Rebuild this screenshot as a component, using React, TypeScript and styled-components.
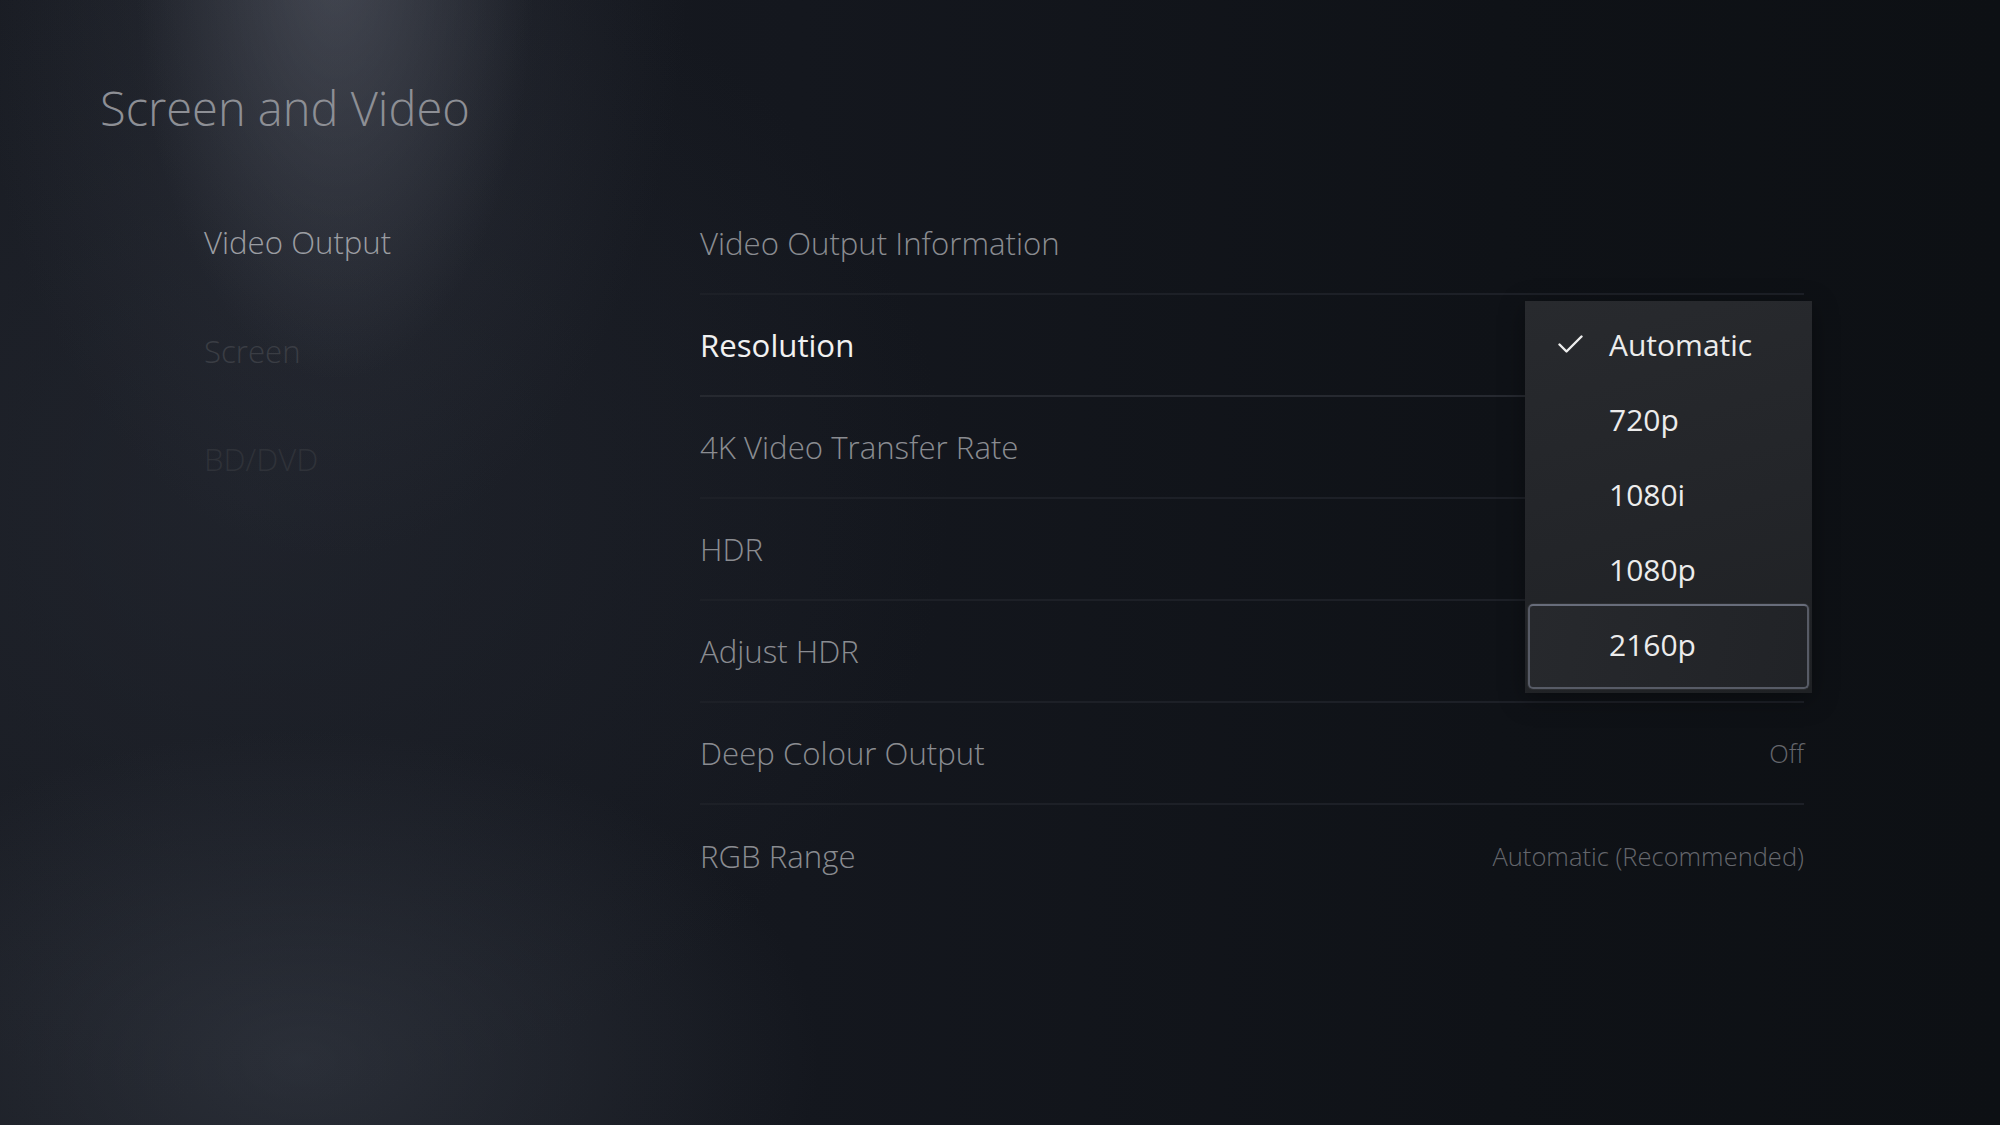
import React from "react";
import styled, { createGlobalStyle } from "styled-components";

const GlobalStyle = createGlobalStyle`
  html, body {
    margin: 0;
    padding: 0;
    background: #12151b;
  }
  * { box-sizing: border-box; }
`;

const Screen = styled.div`
  position: relative;
  width: 2000px;
  height: 1125px;
  overflow: hidden;
  font-family: "Open Sans", "Noto Sans", "DejaVu Sans", sans-serif;
  font-weight: 300;
  background:
    radial-gradient(ellipse 200px 420px at 335px -40px, rgba(100, 104, 116, 0.45), rgba(0, 0, 0, 0) 100%),
    radial-gradient(ellipse 360px 620px at 330px -60px, rgba(70, 74, 86, 0.35), rgba(0, 0, 0, 0) 100%),
    radial-gradient(ellipse 520px 330px at 300px 1060px, rgba(70, 76, 88, 0.42), rgba(0, 0, 0, 0) 100%),
    radial-gradient(ellipse 700px 600px at 250px 500px, rgba(40, 44, 54, 0.5), rgba(0, 0, 0, 0) 100%),
    linear-gradient(90deg, #181b22 0%, #14171e 40%, #0f1217 75%, #0d1014 100%);
`;

const Header = styled.header`
  padding: 85px 0 0 100px;
`;

const Title = styled.h1`
  margin: 0;
  font-size: 47px;
  line-height: 1;
  font-weight: 300;
  color: #8d8f95;
`;

const Main = styled.main`
  display: flex;
  margin-top: 61px;
  padding-left: 204px;
`;

const Nav = styled.nav`
  display: flex;
  flex-direction: column;
  gap: 78.5px;
  width: 496px;
  padding-top: 34px;
`;

const NavItem = styled.div<{ $tone: "active" | "dim" | "dimmer" }>`
  font-size: 31.2px;
  line-height: 30px;
  color: ${(p) => (p.$tone === "active" ? "#9b9da2" : p.$tone === "dim" ? "#3a3d44" : "#2f3239")};
`;

const List = styled.section`
  display: flex;
  flex-direction: column;
  width: 1104px;
`;

const Row = styled.div<{ $focused?: boolean; $last?: boolean }>`
  position: relative;
  display: flex;
  align-items: center;
  justify-content: space-between;
  height: 102px;
  padding-bottom: 1px;
  border-bottom: ${(p) => (p.$last ? "none" : `2px solid ${p.$focused ? "#262930" : "#1d2027"}`)};
`;

const Label = styled.span<{ $focused?: boolean }>`
  font-size: 31.2px;
  line-height: 30px;
  font-weight: ${(p) => (p.$focused ? 400 : 300)};
  color: ${(p) => (p.$focused ? "#f1f1f1" : "#8a8c91")};
`;

const Value = styled.span`
  font-size: 25.5px;
  line-height: 24px;
  color: #64666c;
`;

const Dropdown = styled.div`
  position: absolute;
  top: 6px;
  right: -8px;
  width: 287px;
  padding: 8px 3px 9px;
  background: linear-gradient(165deg, #282a2e 0%, #232529 55%, #1f2124 100%);
  box-shadow: 0 6px 24px rgba(0, 0, 0, 0.35);
  z-index: 2;
`;

const Option = styled.div<{ $focused?: boolean }>`
  display: flex;
  align-items: center;
  height: ${(p) => (p.$focused ? "85px" : "75px")};
  margin: ${(p) => (p.$focused ? "-5px 0 -5px" : "0")};
  padding: 0 0 4px ${(p) => (p.$focused ? "28px" : "30px")};
  border: ${(p) => (p.$focused ? "2px solid #575b66" : "none")};
  border-top-color: ${(p) => (p.$focused ? "#686d7b" : "transparent")};
  border-radius: 5px;
  background: ${(p) => (p.$focused ? "linear-gradient(100deg, #27292d 0%, #212327 100%)" : "transparent")};
  box-shadow: ${(p) => (p.$focused ? "0 0 0 1px rgba(255,255,255,0.05)" : "none")};
`;

const CheckSlot = styled.span`
  display: inline-flex;
  align-items: center;
  width: 51px;
  height: 30px;
`;

const OptionText = styled.span`
  font-size: 30px;
  line-height: 30px;
  font-weight: 400;
  color: #ececec;
`;

const Check = () => (
  <svg width="25" height="19" viewBox="0 0 25 19" fill="none">
    <polyline points="1.5,9.5 8.5,16.5 23.5,1.5" stroke="#ededed" strokeWidth="2.4" strokeLinecap="round" strokeLinejoin="round" />
  </svg>
);

const rows: { label: string; value?: string }[] = [
  { label: "Video Output Information" },
  { label: "Resolution" },
  { label: "4K Video Transfer Rate" },
  { label: "HDR" },
  { label: "Adjust HDR" },
  { label: "Deep Colour Output", value: "Off" },
  { label: "RGB Range", value: "Automatic (Recommended)" },
];

const options = ["Automatic", "720p", "1080i", "1080p", "2160p"];

export default function App() {
  return (
    <Screen>
      <GlobalStyle />
      <Header>
        <Title>Screen and Video</Title>
      </Header>
      <Main>
        <Nav>
          <NavItem $tone="active">Video Output</NavItem>
          <NavItem $tone="dim">Screen</NavItem>
          <NavItem $tone="dimmer">BD/DVD</NavItem>
        </Nav>
        <List>
          {rows.map((r, i) => {
            const focused = r.label === "Resolution";
            return (
              <Row key={r.label} $focused={focused} $last={i === rows.length - 1}>
                <Label $focused={focused}>{r.label}</Label>
                {r.value && <Value>{r.value}</Value>}
                {focused && (
                  <Dropdown>
                    {options.map((o, j) => (
                      <Option key={o} $focused={o === "2160p"}>
                        <CheckSlot>{j === 0 && <Check />}</CheckSlot>
                        <OptionText>{o}</OptionText>
                      </Option>
                    ))}
                  </Dropdown>
                )}
              </Row>
            );
          })}
        </List>
      </Main>
    </Screen>
  );
}
